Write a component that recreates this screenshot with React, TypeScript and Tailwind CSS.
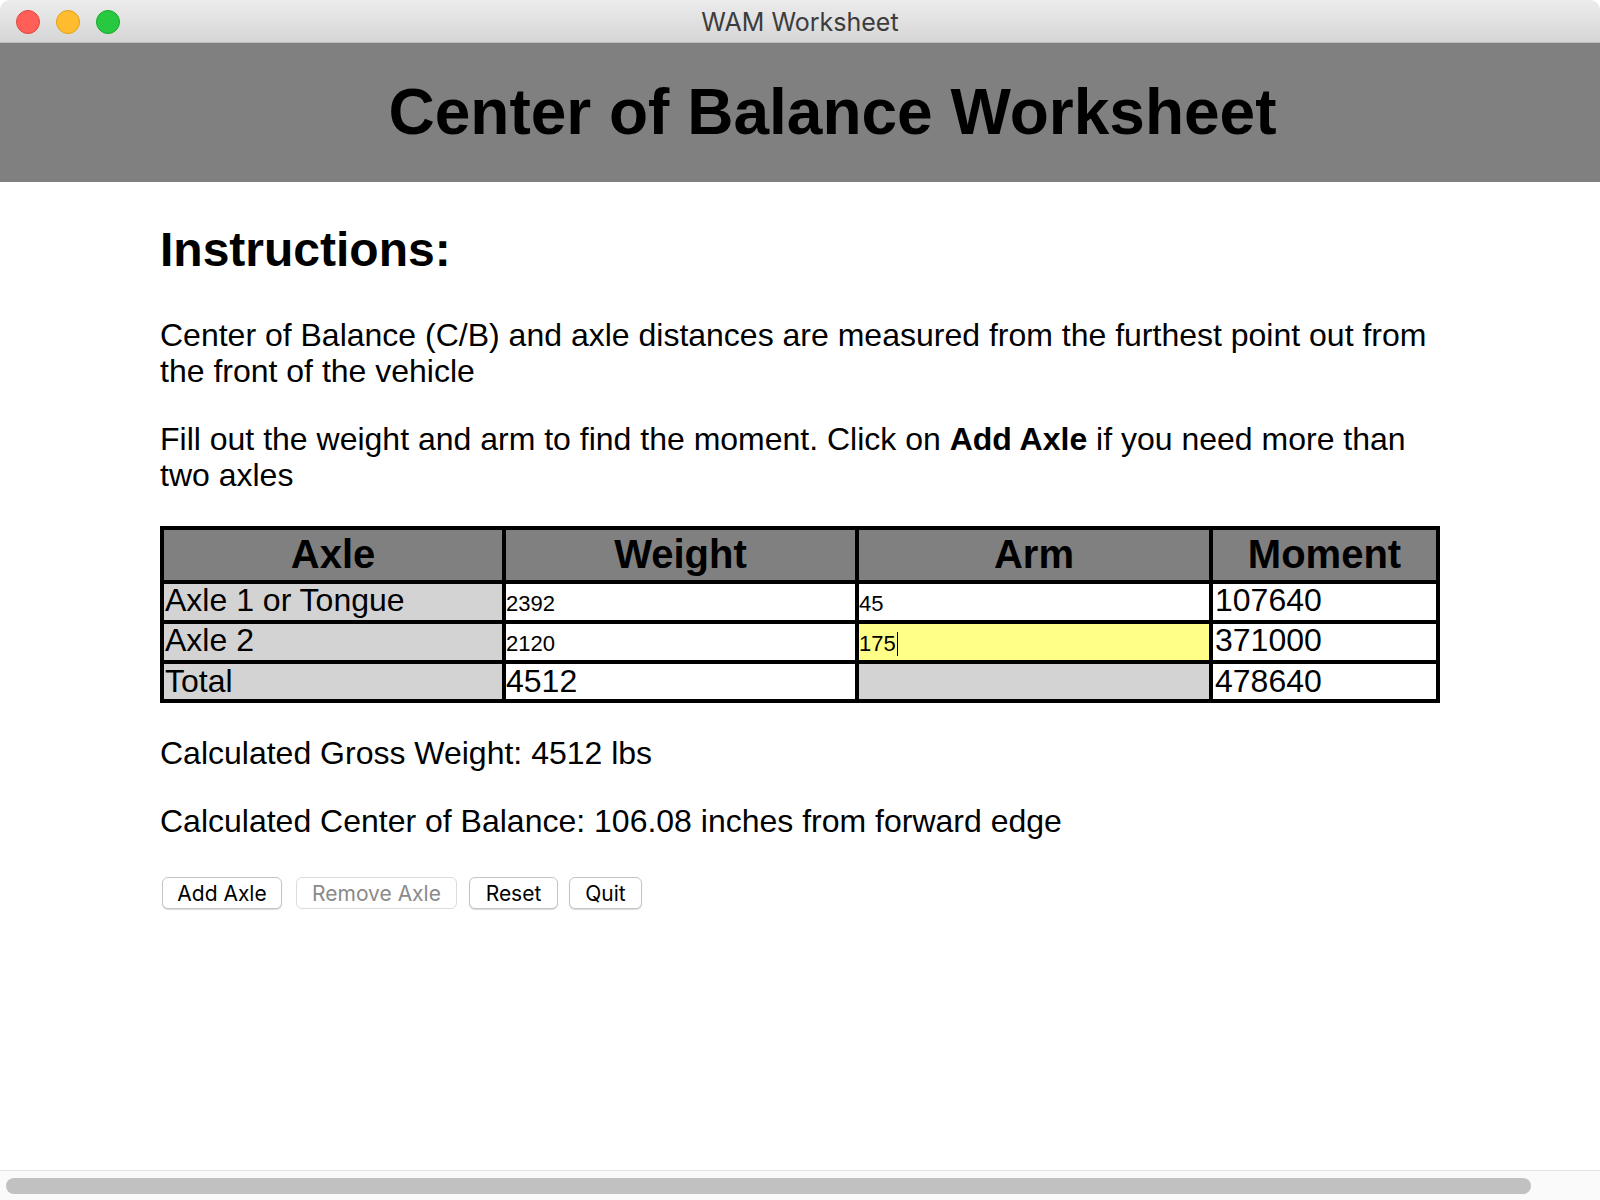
import React from "react";

interface AxleRow {
  label: string;
  weight: string;
  arm: string;
  moment: string;
  focused?: boolean;
}

const rows: AxleRow[] = [
  { label: "Axle 1 or Tongue", weight: "2392", arm: "45", moment: "107640" },
  { label: "Axle 2", weight: "2120", arm: "175", moment: "371000", focused: true },
];

const sans = "font-['Liberation_Sans',Arial,sans-serif]";
const ui = "font-['Inter','Open_Sans',sans-serif]";

const Light = ({ color }: { color: string }) => (
  <span className={`block h-[24px] w-[24px] rounded-full border ${color}`} />
);

const TitleBar = () => {
  return (
    <div className="grid h-[43px] grid-cols-[1fr_auto_1fr] items-center rounded-t-[10px] border-b border-[#bdbdbd] bg-gradient-to-b from-[#ececec] to-[#d6d6d6]">
      <div className="flex items-center gap-[16px] pl-[16px] pt-[1px]">
        <Light color="border-[#e2463f] bg-[#ff5f57]" />
        <Light color="border-[#e1a116] bg-[#febc2e]" />
        <Light color="border-[#12ac28] bg-[#28c840]" />
      </div>
      <div className={`${ui} pt-[4px] text-[25px] text-[#3c3c3c]`}>WAM Worksheet</div>
      <div />
    </div>
  );
};

const Btn = ({
  label,
  width,
  disabled,
}: {
  label: string;
  width: string;
  disabled?: boolean;
}) => {
  return (
    <button
      disabled={disabled}
      className={`${ui} ${width} h-[32px] rounded-[6px] border bg-white text-center text-[21px] leading-none ${
        disabled
          ? "border-[#dcdcdc] text-[#8a8a8a]"
          : "border-[#c4c4c4] text-black shadow-[0_1px_1px_rgba(0,0,0,0.15)]"
      }`}
    >
      {label}
    </button>
  );
};

export default function App() {
  return (
    <div className={`${sans} flex h-[1200px] w-[1600px] flex-col overflow-hidden bg-white text-black`}>
      <TitleBar />

      <div className="flex h-[139px] items-center justify-center bg-[#808080] pl-[65px]">
        <h1 className="text-[64px] font-bold leading-[1.15]">Center of Balance Worksheet</h1>
      </div>

      <main className="flex-1 px-[160px]">
        <h2 className="mt-[40px] text-[48px] font-bold leading-[1.15]">Instructions:</h2>

        <p className="mt-[40px] text-[32px] leading-[36px]">
          Center of Balance (C/B) and axle distances are measured from the furthest point out from
          the front of the vehicle
        </p>
        <p className="mt-[32px] text-[32px] leading-[36px]">
          Fill out the weight and arm to find the moment. Click on <b>Add Axle</b> if you need more
          than two axles
        </p>

        <table className="mt-[33px] w-[1280px] table-fixed border-separate border-spacing-0 border-2 border-black text-[32px]">
          <colgroup>
            <col className="w-[342px]" />
            <col className="w-[353px]" />
            <col className="w-[354px]" />
            <col className="w-[227px]" />
          </colgroup>
          <thead>
            <tr className="bg-[#808080]">
              {["Axle", "Weight", "Arm", "Moment"].map((h) => (
                <th key={h} className="border-2 border-black p-0 pb-[1px] text-center text-[40px] font-bold leading-[49px]">
                  {h}
                </th>
              ))}
            </tr>
          </thead>
          <tbody>
            {rows.map((r) => (
              <tr key={r.label}>
                <td className="border-2 border-black bg-[#d3d3d3] p-0 pl-[1px] align-top leading-[32px]">
                  {r.label}
                </td>
                <td className="border-2 border-black bg-white p-0">
                  <input
                    readOnly
                    value={r.weight}
                    className={`${sans} block h-[36px] w-full bg-white p-0 pt-[4px] text-[22px] outline-none`}
                  />
                </td>
                <td className="border-2 border-black p-0">
                  {r.focused ? (
                    <div className="flex h-[36px] items-center bg-[#ffff88] pt-[4px] text-[22px] leading-none">
                      <span>{r.arm}</span>
                      <span className="ml-[1px] h-[24px] w-[1px] bg-black" />
                    </div>
                  ) : (
                    <input
                      readOnly
                      value={r.arm}
                      className={`${sans} block h-[36px] w-full bg-white p-0 pt-[4px] text-[22px] outline-none`}
                    />
                  )}
                </td>
                <td className="border-2 border-black bg-white p-0 pl-[2px] align-top leading-[32px]">
                  {r.moment}
                </td>
              </tr>
            ))}
            <tr className="leading-[35px]">
              <td className="border-2 border-black bg-[#d3d3d3] p-0 pl-[1px]">Total</td>
              <td className="border-2 border-black bg-white p-0">4512</td>
              <td className="border-2 border-black bg-[#d3d3d3] p-0" />
              <td className="border-2 border-black bg-white p-0 pl-[2px]">478640</td>
            </tr>
          </tbody>
        </table>

        <p className="mt-[32px] text-[32px] leading-[36px]">Calculated Gross Weight: 4512 lbs</p>
        <p className="mt-[32px] text-[32px] leading-[36px]">
          Calculated Center of Balance: 106.08 inches from forward edge
        </p>

        <div className="mt-[38px] flex items-center pl-[2px]">
          <Btn label="Add Axle" width="w-[120px]" />
          <div className="ml-[14px]">
            <Btn label="Remove Axle" width="w-[161px]" disabled />
          </div>
          <div className="ml-[12px]">
            <Btn label="Reset" width="w-[89px]" />
          </div>
          <div className="ml-[11px]">
            <Btn label="Quit" width="w-[73px]" />
          </div>
        </div>
      </main>

      <div className="h-[30px] border-t border-[#e3e3e3] bg-[#fafafa] pt-[7px]">
        <div className="ml-[6px] h-[16px] w-[1525px] rounded-full bg-[#c1c1c1]" />
      </div>
    </div>
  );
}
